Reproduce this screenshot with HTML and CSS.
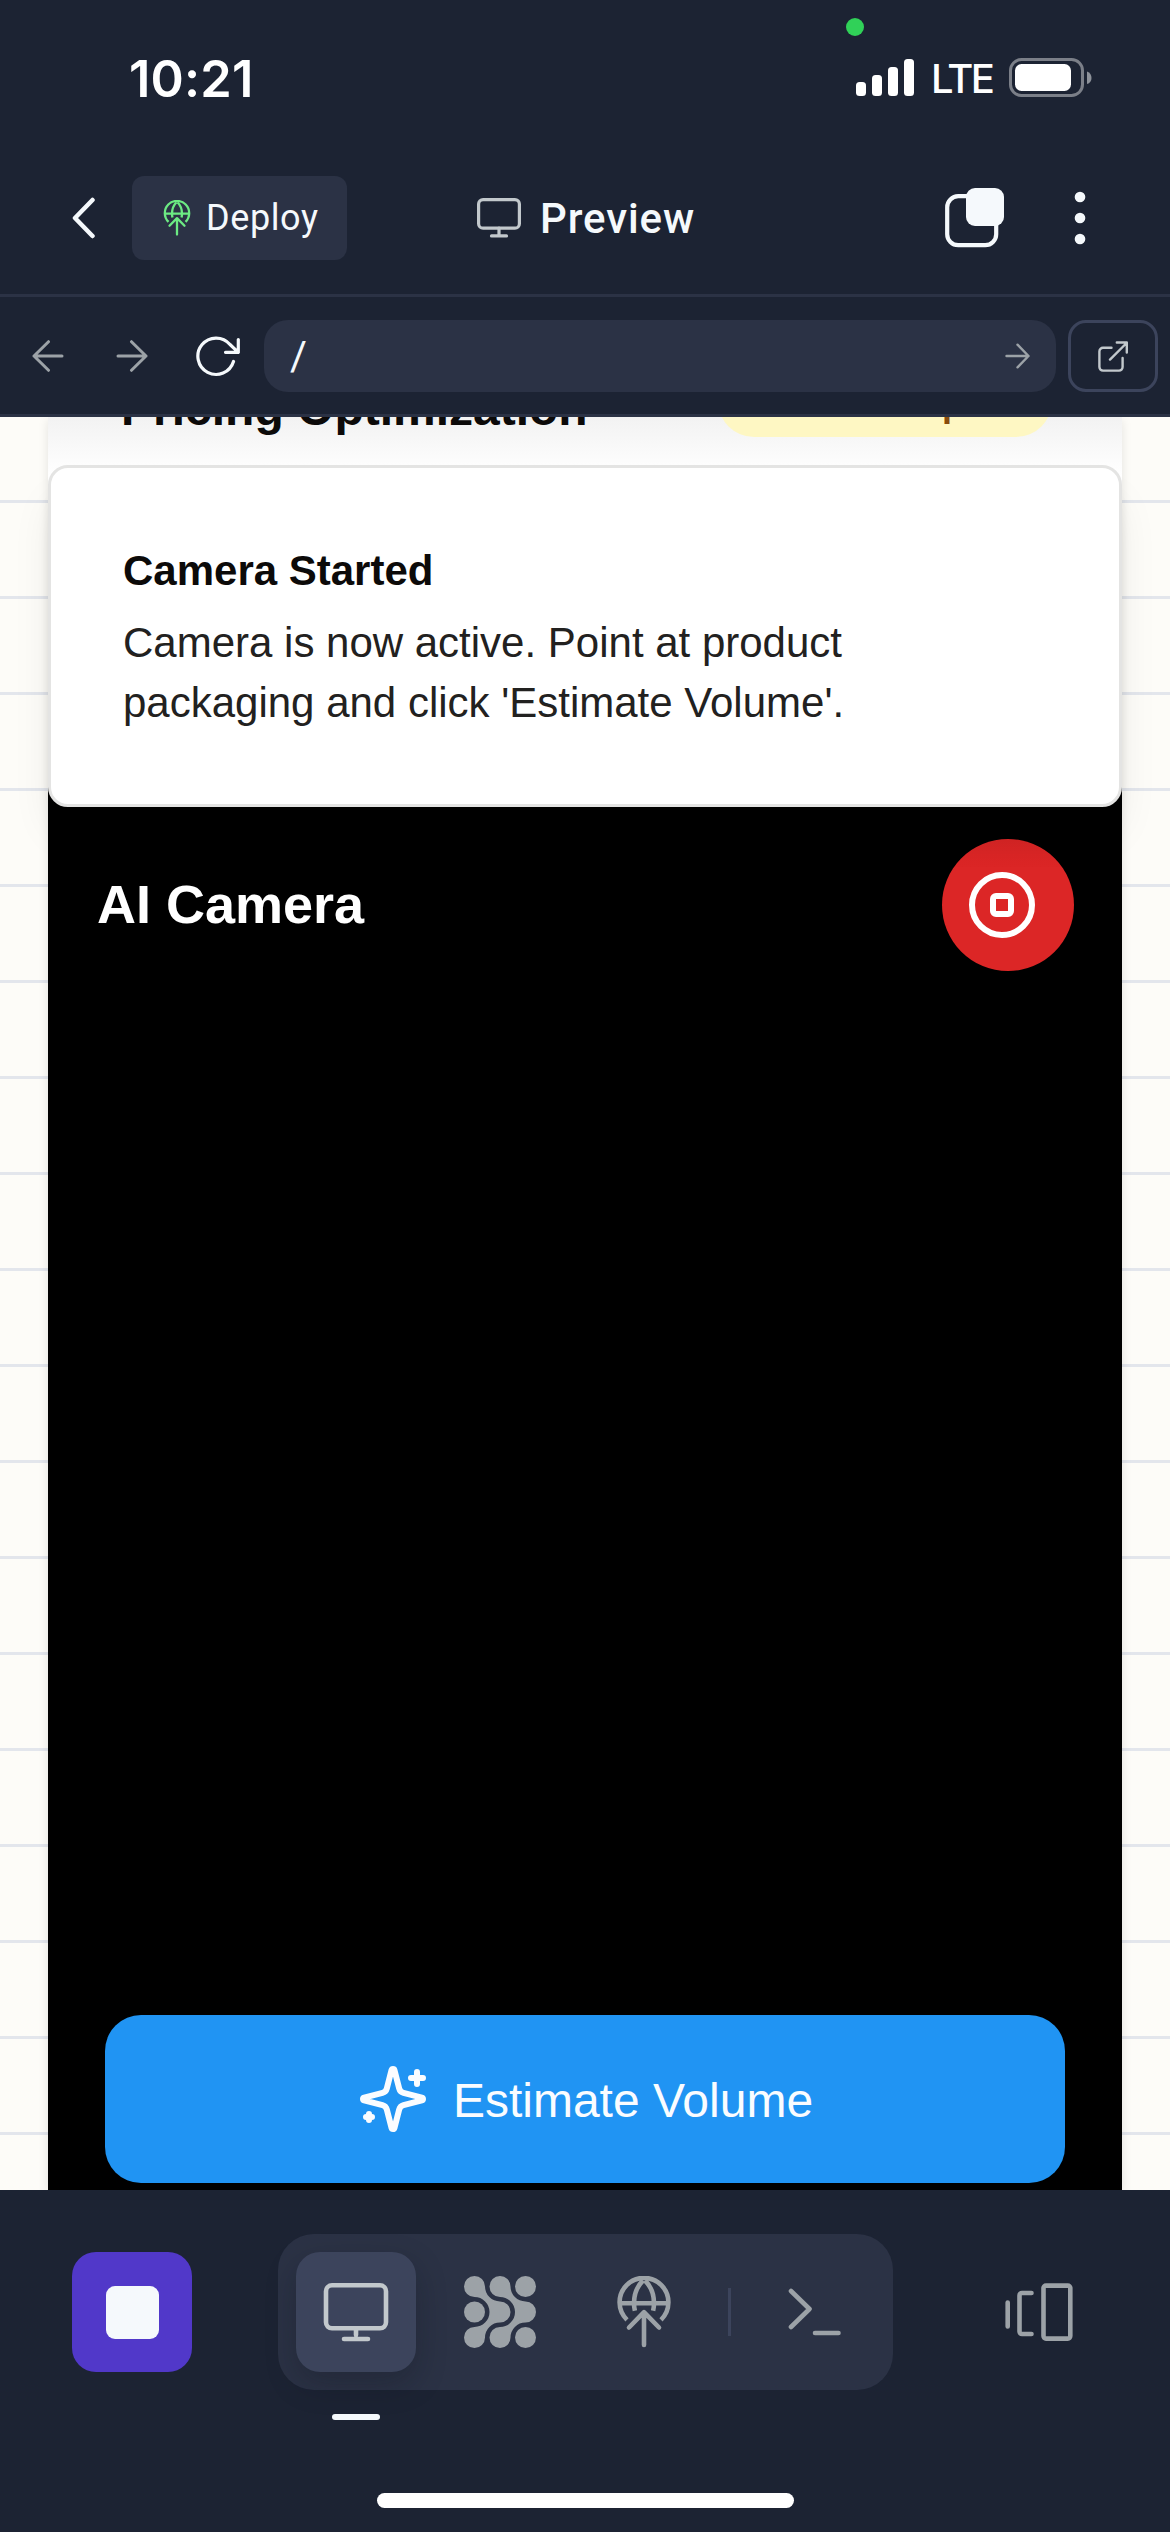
FILE: index.html
```html
<!DOCTYPE html>
<html lang="en">
<head>
<meta charset="utf-8">
<title>Preview</title>
<link rel="stylesheet" href="styles.css">
</head>
<body>
<svg class="defs" width="0" height="0" aria-hidden="true">
  <symbol id="deploy" viewBox="0 0 72 72">
    <g fill="none" stroke="currentColor" stroke-width="4.6">
      <path d="M19 43.8A24.4 24.4 0 1 1 53 43.8M12 27.2H60M35 4.5C28.5 11 26 19 26 27.2c0 3 .3 5 .9 7.6M37 4.5C43.5 11 46 19 46 27.2c0 3-.3 5-.9 7.6"/>
      <path stroke-linecap="round" stroke-linejoin="round" d="M36 69V37M21 51.5 36 36.2 51 51.5"/>
    </g>
  </symbol>
</svg>
<div class="screen">
  <header class="status">
    <span class="time">10:21</span>
    <div class="status-right">
      <i class="camera-dot"></i>
      <svg width="58" height="38" viewBox="0 0 58 38" fill="#fff"><rect y="23" width="10" height="14" rx="3.5"/><rect x="16" y="16" width="10" height="21" rx="3.5"/><rect x="32" y="8" width="10" height="29" rx="3.5"/><rect x="48" width="10" height="37" rx="3.5"/></svg>
      <span class="network">LTE</span>
      <svg width="83" height="40" viewBox="0 0 83 40"><rect x="1.5" y="1.5" width="72" height="36" rx="11" fill="none" stroke="#7b7f88" stroke-width="3"/><rect x="6" y="6" width="56" height="27" rx="6.5" fill="#fff"/><path d="M78 13.5c6 2 6 11 0 12.5z" fill="#8e929a"/></svg>
    </div>
  </header>

  <nav class="topbar">
    <svg class="back" width="24" height="42" viewBox="0 0 24 42"><path d="M20.5 3 3 21l17.500 18" fill="none" stroke="#f5f9fc" stroke-width="4.500" stroke-linecap="round" stroke-linejoin="round"/></svg>
    <div class="deploy"><svg width="36" height="36"><use href="#deploy"/></svg><span>Deploy</span></div>
    <div class="heading">
      <svg width="44" height="40" viewBox="0 0 44 40" fill="none" stroke="#c2c8cc" stroke-width="3.200" stroke-linecap="round"><rect x="1.600" y="1.600" width="40.800" height="28.600" rx="4.500"/><path d="M22 30v7.500M14.500 37.900h15"/></svg>
      <span>Preview</span>
    </div>
    <svg class="tabs" width="60" height="60" viewBox="0 0 60 60"><rect x="2.200" y="8.200" width="49" height="49" rx="11" fill="none" stroke="#f5f9fc" stroke-width="4.200"/><rect x="21" width="38" height="38" rx="9" fill="#f5f9fc"/></svg>
    <svg class="menu" width="12" height="54" viewBox="0 0 12 54" fill="#f5f9fc"><circle cx="6" cy="6" r="5.300"/><circle cx="6" cy="27" r="5.300"/><circle cx="6" cy="48" r="5.300"/></svg>
  </nav>

  <div class="urlbar">
    <svg class="nav-prev" width="32" height="32" viewBox="0 0 32 32" fill="none" stroke="#9ca2a7" stroke-width="3" stroke-linecap="round" stroke-linejoin="round"><path d="M30 16H2M16.500 1.700 2 16l14.500 14.300"/></svg>
    <svg class="nav-next" width="32" height="32" viewBox="0 0 32 32" fill="none" stroke="#9ca2a7" stroke-width="3" stroke-linecap="round" stroke-linejoin="round"><path d="M2 16h28M15.500 1.700 30 16 15.500 30.300"/></svg>
    <svg class="reload" width="45" height="42" viewBox="0 0 45 42" fill="none" stroke="#f5f9fc" stroke-width="3.200" stroke-linecap="round" stroke-linejoin="round"><path d="M37.500 26.500A18.200 18.200 0 1 1 34 9.500L42.300 17.300M42.300 4.500v12.800H29.500"/></svg>
    <div class="address"><span>/</span>
      <svg width="25" height="26" viewBox="0 0 25 26" fill="none" stroke="#9ca2a7" stroke-width="2.400" stroke-linecap="round" stroke-linejoin="round"><path d="M1.500 13h22M12.500 1.700 23.500 13 12.500 24.300"/></svg>
    </div>
    <div class="open">
      <svg width="30" height="31" viewBox="0 0 30 31" fill="none" stroke="#c2c8cc" stroke-width="2.400" stroke-linecap="round" stroke-linejoin="round"><path d="M13.500 6.800H5A3.600 3.600 0 0 0 1.400 10.400V26A3.600 3.600 0 0 0 5 29.600H21A3.600 3.600 0 0 0 24.600 26V17M12 18.600 28.600 2M18.800 1.500h10v10"/></svg>
    </div>
  </div>

  <main class="page">
    <section class="card">
      <div class="card-head"><h2>Pricing Optimization</h2><span class="badge">Data Incomplete</span></div>
      <div class="camera">
        <div class="camera-head">
          <h3>AI Camera</h3>
          <div class="stop"><svg width="72" height="72" viewBox="0 0 24 24" fill="none" stroke="#fff" stroke-width="2" stroke-linejoin="round"><circle cx="12" cy="12" r="10"/><rect x="9" y="9" width="6" height="6" rx="1"/></svg></div>
        </div>
        <div class="estimate">
          <svg width="72" height="72" viewBox="0 0 24 24" fill="none" stroke="#fafcff" stroke-width="2" stroke-linecap="round" stroke-linejoin="round"><path d="M9.937 15.500A2 2 0 0 0 8.500 14.063l-6.135-1.582a.5.5 0 0 1 0-.962L8.500 9.936A2 2 0 0 0 9.937 8.500l1.582-6.135a.5.5 0 0 1 .963 0L14.063 8.500A2 2 0 0 0 15.500 9.937l6.135 1.581a.5.5 0 0 1 0 .964L15.500 14.063a2 2 0 0 0-1.437 1.437l-1.582 6.135a.5.5 0 0 1-.963 0zM20 3v4M22 5h-4M4 17v2M5 18H3"/></svg>
          <span>Estimate Volume</span>
        </div>
      </div>
    </section>
    <aside class="toast">
      <strong>Camera Started</strong>
      <p>Camera is now active. Point at product<br>packaging and click 'Estimate Volume'.</p>
    </aside>
  </main>

  <footer class="dock">
    <div class="halt"><i></i></div>
    <div class="tools">
      <div class="tool active"><svg width="66" height="60" viewBox="0 0 66 60" fill="none" stroke="#c2c8cc" stroke-width="4.600" stroke-linecap="round"><rect x="3" y="3.300" width="60" height="48" rx="6"/><path d="M33 52v6M21 62h24" transform="translate(0 -5)"/></svg></div>
      <div class="tool"><svg width="72" height="72" viewBox="0 0 72 72" fill="#9ca2a7"><circle cx="61.500" cy="10.500" r="10.500"/><circle cx="10.500" cy="36" r="10.500"/><circle cx="61.500" cy="61.500" r="10.500"/><path d="M21 10.500A15 15 0 0 0 36 25.500 10.500 10.500 0 0 1 36 46.500 15 15 0 0 0 21 61.500 10.500 10.500 0 1 1 10.500 51 15 15 0 0 0 10.500 21 10.500 10.500 0 1 1 21 10.500Z"/><path transform="translate(25.500)" d="M21 10.500A15 15 0 0 0 36 25.500 10.500 10.500 0 0 1 36 46.500 15 15 0 0 0 21 61.500 10.500 10.500 0 1 1 10.500 51 15 15 0 0 0 10.500 21 10.500 10.500 0 1 1 21 10.500Z"/></svg></div>
      <div class="tool"><svg width="72" height="72"><use href="#deploy"/></svg></div>
      <i class="divider"></i>
      <div class="tool"><svg width="54" height="48" viewBox="0 0 54 48" fill="none" stroke="#9ca2a7" stroke-width="4.600" stroke-linecap="round" stroke-linejoin="round"><path d="M3 3 21.500 21 3 39M27 45h23.500"/></svg></div>
    </div>
    <svg class="devices" width="70" height="60" viewBox="0 0 70 60" fill="none" stroke="#9ca2a7" stroke-width="4.600" stroke-linecap="round" stroke-linejoin="round"><path d="M3.700 20.500v24M27.500 11H18a2.500 2.500 0 0 0-2.500 2.500v36A2.500 2.500 0 0 0 18 52h9.500"/><rect x="39.500" y="3.600" width="26.800" height="53" rx="2.500"/></svg>
  </footer>
  <div class="indicator"></div>
  <div class="home"></div>
</div>
</body>
</html>
```
FILE: styles.css
```css
* { box-sizing: border-box; margin: 0; }
body { width: 1170px; height: 2532px; overflow: hidden; background: #1c2333; font-family: "Liberation Sans", Arial, sans-serif; }
svg { display: block; flex: none; }
.tool.active svg rect { height: 43px; }
.defs { position: absolute; }
.screen { width: 1170px; height: 2532px; display: flex; flex-direction: column; }

.status { height: 156px; display: flex; justify-content: space-between; align-items: center; padding: 0 78px 0 129px; color: #fff; font-family: Inter, sans-serif; }
.time { font-size: 50.500px; font-weight: 600; letter-spacing: 0.2px; }
.status-right { position: relative; display: flex; align-items: center; }
.camera-dot { position: absolute; left: -10px; top: -36px; width: 18px; height: 18px; border-radius: 50%; background: #30d158; }
.network { width: 95px; padding-left: 17px; font-size: 40px; font-weight: 500; letter-spacing: -2.600px; }

.topbar { height: 141px; display: flex; align-items: center; padding: 0 84px 14px 72px; border-bottom: 3px solid #2b3245; font-family: Roboto, sans-serif; color: #f5f9fc; }
.back { margin-right: 36px; }
.deploy { width: 215px; height: 84px; border-radius: 12px; background: #2b3245; display: flex; align-items: center; gap: 11px; padding-left: 27px; font-size: 36px; letter-spacing: 0.6px; }
.deploy svg { color: #6cea83; }
.heading { margin-left: 130px; width: 468px; display: flex; align-items: center; gap: 19px; font-size: 42px; font-weight: 500; letter-spacing: 0.9px; }
.menu { margin-left: auto; }

.urlbar { height: 120px; display: flex; align-items: center; padding: 1px 12px 0 32px; border-bottom: 3px solid #2b3245; }
.nav-next { margin-left: 52px; }
.reload { margin-left: 48px; margin-right: 23px; }
.address { width: 792px; height: 72px; border-radius: 24px; background: #2b3245; display: flex; align-items: center; justify-content: space-between; padding: 0 26px; color: #f5f9fc; font: 41px Roboto, sans-serif; }
.open { margin-left: auto; width: 90px; height: 72px; border: 3px solid #3c445c; border-radius: 18px; display: flex; align-items: center; justify-content: center; }

.page { position: relative; height: 1773px; overflow: hidden; padding: 0 48px; background: linear-gradient(#e3e6ec 3px, transparent 3px) 0 83px / 100% 96px, #fdfcf8; }
.card { height: 1773px; display: flex; flex-direction: column; background: #000; box-shadow: 0 3px 10px rgba(0, 0, 0, .1); }
.card-head { height: 300px; display: flex; justify-content: space-between; align-items: flex-start; padding: 0 70px 0 73px; background: linear-gradient(#f2f2f2, #fdfdfd 48px, #fff 60px); }
.card-head h2 { margin-top: -38px; font-size: 48px; line-height: 60px; color: #0c0a09; white-space: nowrap; }
.badge { margin-top: -52px; width: 334px; height: 72px; padding: 3px 0 0 4px; border-radius: 36px; background: #fef7c3; color: #894b0d; font-size: 36px; line-height: 72px; font-weight: 700; text-align: center; white-space: nowrap; }
.camera { flex: 1; display: flex; flex-direction: column; justify-content: space-between; padding: 122px 48px 7px; color: #fff; }
.camera-head { display: flex; justify-content: space-between; align-items: center; }
.camera-head h3 { font-size: 54px; padding: 0 0 3px 1px; }
.stop { width: 132px; height: 132px; border-radius: 50%; background: linear-gradient(#d62424, #dc2626 28px); display: flex; align-items: center; padding-left: 24px; }
.estimate { margin: 0 9px; height: 168px; border-radius: 36px; background: #2094f3; color: #fafcff; display: flex; align-items: center; justify-content: center; gap: 24px; font-size: 48px; }
.estimate span { padding-top: 2px; }
.toast { position: absolute; left: 48px; top: 48px; width: 1074px; height: 342px; padding: 73px 72px 71px; border: 3px solid #e4e4e3; border-radius: 20px; background: #fff; box-shadow: 0 30px 45px -9px rgba(0, 0, 0, .1), 0 12px 18px -12px rgba(0, 0, 0, .1); font-size: 42px; line-height: 60px; color: #222120; }
.toast strong { display: block; color: #0c0a09; margin-bottom: 12px; }

.dock { display: flex; align-items: flex-start; padding: 44px 96px 0 72px; }
.halt { width: 120px; height: 120px; margin: 18px 86px 0 0; border-radius: 24px; background: #5138c9; display: flex; align-items: center; justify-content: center; }
.halt i { width: 53px; height: 53px; border-radius: 9px; background: #f5f9fc; }
.tools { width: 615px; height: 156px; border-radius: 36px; background: #2b3245; padding: 18px; display: flex; align-items: center; gap: 24px; color: #9ca2a7; }
.tool { width: 120px; height: 120px; border-radius: 24px; display: flex; align-items: center; justify-content: center; }
.tool.active { background: #3c445c; box-shadow: 0 12px 30px rgba(10, 14, 25, .25); }
.divider { width: 3px; height: 48px; background: #3c445c; }
.devices { margin: 48px 0 0 auto; }
.indicator { width: 48px; height: 6px; margin: 24px 0 0 332px; border-radius: 3px; background: #f5f9fc; }
.home { width: 417px; height: 15px; margin: 73px 0 0 377px; border-radius: 8px; background: #fff; }
```
